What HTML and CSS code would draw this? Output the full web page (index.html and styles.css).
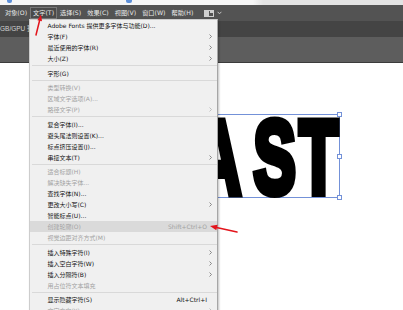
FILE: index.html
```html
<!DOCTYPE html>
<html lang="zh-CN">
<head>
<meta charset="utf-8">
<title>Illustrator 文字菜单</title>
<link rel="stylesheet" href="styles.css">
</head>
<body>
<div class="app">
  <div class="topstrip"><span class="blip b1"></span><span class="blip b2"></span></div>
  <div class="menubar">
    <span class="mb-item">对象(O)</span>
    <span class="mb-item active">文字(T)</span>
    <span class="mb-item">选择(S)</span>
    <span class="mb-item">效果(C)</span>
    <span class="mb-item">视图(V)</span>
    <span class="mb-item">窗口(W)</span>
    <span class="mb-item">帮助(H)</span>
    <span class="mb-tools">
      <svg class="ws-icon" width="10" height="7" viewBox="0 0 10 7"><rect x="0.5" y="0.5" width="9" height="6" fill="none" stroke="#cfcfcf"/><rect x="1" y="1" width="4" height="5" fill="#cfcfcf"/><rect x="6" y="1" width="3" height="2" fill="#cfcfcf"/></svg>
      <svg class="ws-chev" width="5" height="4" viewBox="0 0 5 4"><path d="M0.6 0.8 L2.5 2.8 L4.4 0.8" fill="none" stroke="#cfcfcf" stroke-width="0.9"/></svg>
    </span>
  </div>
  <div class="tabbar"><span class="doc-title">GB/GPU 预览)</span></div>
  <div class="panelbar"></div>
  <div class="canvas">
    <div class="selection">
      <div class="art-text"><span class="ch-a">A</span><span class="ch-s">S</span><span>T</span></div>
      <span class="handle h-top"></span>
      <span class="handle h-mid"></span>
      <span class="handle h-bot"></span>
    </div>
  </div>

  <div class="menu">
    <div class="mi"><span class="label">Adobe Fonts 提供更多字体与功能(D)...</span><span class="sub"></span></div>
    <div class="mi"><span class="label">字体(F)</span><span class="sub"><svg width="3" height="5" viewBox="0 0 3 5"><path d="M0.5 0.5 L2.5 2.5 L0.5 4.5"/></svg></span></div>
    <div class="mi"><span class="label">最近使用的字体(R)</span><span class="sub"><svg width="3" height="5" viewBox="0 0 3 5"><path d="M0.5 0.5 L2.5 2.5 L0.5 4.5"/></svg></span></div>
    <div class="mi"><span class="label">大小(Z)</span><span class="sub"><svg width="3" height="5" viewBox="0 0 3 5"><path d="M0.5 0.5 L2.5 2.5 L0.5 4.5"/></svg></span></div>
    <div class="sep"></div>
    <div class="mi"><span class="label">字形(G)</span><span class="sub"></span></div>
    <div class="sep"></div>
    <div class="mi dis"><span class="label">类型转换(V)</span><span class="sub"></span></div>
    <div class="mi dis"><span class="label">区域文字选项(A)...</span><span class="sub"></span></div>
    <div class="mi dis"><span class="label">路径文字(P)</span><span class="sub"><svg width="3" height="5" viewBox="0 0 3 5"><path d="M0.5 0.5 L2.5 2.5 L0.5 4.5"/></svg></span></div>
    <div class="sep"></div>
    <div class="mi"><span class="label">复合字体(I)...</span><span class="sub"></span></div>
    <div class="mi"><span class="label">避头尾法则设置(K)...</span><span class="sub"></span></div>
    <div class="mi"><span class="label">标点挤压设置(J)...</span><span class="sub"></span></div>
    <div class="mi"><span class="label">串接文本(T)</span><span class="sub"><svg width="3" height="5" viewBox="0 0 3 5"><path d="M0.5 0.5 L2.5 2.5 L0.5 4.5"/></svg></span></div>
    <div class="sep"></div>
    <div class="mi dis"><span class="label">适合标题(H)</span><span class="sub"></span></div>
    <div class="mi dis"><span class="label">解决缺失字体...</span><span class="sub"></span></div>
    <div class="mi"><span class="label">查找字体(N)...</span><span class="sub"></span></div>
    <div class="mi"><span class="label">更改大小写(C)</span><span class="sub"><svg width="3" height="5" viewBox="0 0 3 5"><path d="M0.5 0.5 L2.5 2.5 L0.5 4.5"/></svg></span></div>
    <div class="mi"><span class="label">智能标点(U)...</span><span class="sub"></span></div>
    <div class="mi dis hl"><span class="label">创建轮廓(O)</span><span class="key">Shift+Ctrl+O</span><span class="sub"></span></div>
    <div class="mi dis"><span class="label">视觉边距对齐方式(M)</span><span class="sub"></span></div>
    <div class="sep"></div>
    <div class="mi"><span class="label">插入特殊字符(I)</span><span class="sub"><svg width="3" height="5" viewBox="0 0 3 5"><path d="M0.5 0.5 L2.5 2.5 L0.5 4.5"/></svg></span></div>
    <div class="mi"><span class="label">插入空白字符(W)</span><span class="sub"><svg width="3" height="5" viewBox="0 0 3 5"><path d="M0.5 0.5 L2.5 2.5 L0.5 4.5"/></svg></span></div>
    <div class="mi"><span class="label">插入分隔符(B)</span><span class="sub"><svg width="3" height="5" viewBox="0 0 3 5"><path d="M0.5 0.5 L2.5 2.5 L0.5 4.5"/></svg></span></div>
    <div class="mi dis"><span class="label">用占位符文本填充</span><span class="sub"></span></div>
    <div class="sep"></div>
    <div class="mi"><span class="label">显示隐藏字符(S)</span><span class="key">Alt+Ctrl+I</span><span class="sub"></span></div>
    <div class="mi dis"><span class="label">文字方向(Y)</span><span class="sub"><svg width="3" height="5" viewBox="0 0 3 5"><path d="M0.5 0.5 L2.5 2.5 L0.5 4.5"/></svg></span></div>
  </div>

  <svg class="annot" width="403" height="310" viewBox="0 0 403 310">
    <line x1="36" y1="35" x2="39.6" y2="20.5" stroke="#e3141b" stroke-width="1.5" stroke-linecap="round"/>
    <polygon points="41,14.5 42,21.3 37.4,20.3" fill="#e3141b"/>
    <line x1="237" y1="232" x2="216.5" y2="227.4" stroke="#e3141b" stroke-width="1.5" stroke-linecap="round"/>
    <polygon points="210,226 217.6,224.8 216.3,230.2" fill="#e3141b"/>
  </svg>
</div>
</body>
</html>
```

FILE: styles.css
```css
html, body {
  margin: 0;
  padding: 0;
}

body {
  width: 403px;
  height: 310px;
  overflow: hidden;
  font-family: "DejaVu Sans", "Noto Sans CJK SC", sans-serif;
  background: #fff;
}

.app {
  position: relative;
  width: 403px;
  height: 310px;
  display: flex;
  flex-direction: column;
  overflow: hidden;
  background: #fff;
}

/* very top strip of the window behind */
.topstrip {
  flex: none;
  height: 5px;
  display: flex;
  background: linear-gradient(to right, #f6f6f6 0, #f6f6f6 253px, #e3e3e3 263px, #e3e3e3 100%);
}

.blip {
  height: 3px;
  background: #5d8fd8;
  border-radius: 0 0 2px 2px;
}

.b1 { width: 5px; margin-left: 7px; }
.b2 { width: 6px; margin-left: 114px; }

/* application menu bar */
.menubar {
  flex: none;
  height: 16px;
  display: flex;
  align-items: center;
  padding-left: 2px;
  background: #535353;
  color: #e8e8e8;
  font-family: "DejaVu Sans", "Noto Sans CJK SC", sans-serif;
  font-size: 6.2px;
  white-space: nowrap;
}

.mb-item {
  height: 10px;
  line-height: 10px;
  padding: 0 2px;
  border: 1px solid transparent;
}

.mb-item.active {
  border-color: #787878;
  background: #4a4a4a;
}

.mb-tools {
  display: flex;
  align-items: center;
  gap: 3px;
  margin-left: 8px;
}

/* document tab bar */
.tabbar {
  flex: none;
  height: 16px;
  line-height: 16px;
  background: #444;
  color: #d2d2d2;
  font-family: "Liberation Sans", "Noto Sans CJK SC", sans-serif;
  font-size: 6.5px;
  white-space: nowrap;
  overflow: hidden;
}

/* control panel */
.panelbar {
  flex: none;
  height: 25px;
  background: #5d5d5d;
  border-bottom: 1px solid #3b3b3b;
}

/* artboard */
.canvas {
  flex: 1;
  position: relative;
  background: #fff;
}

.selection {
  position: absolute;
  left: 150px;
  top: 51px;
  width: 190px;
  height: 84px;
  box-sizing: border-box;
  border: 1px solid #7391d8;
}

.art-text {
  position: absolute;
  right: 1px;
  top: -9.5px;
  font-family: "Liberation Sans", sans-serif;
  font-weight: bold;
  font-size: 103px;
  line-height: 1;
  color: #000;
  -webkit-text-stroke: 8px #000;
  white-space: nowrap;
  transform: scaleX(0.615);
  transform-origin: right top;
}

.ch-a { margin-right: 20px; }
.ch-s { margin-right: 6px; }

.handle {
  position: absolute;
  right: -3px;
  width: 3px;
  height: 3px;
  background: #fff;
  border: 1px solid #7391d8;
}

.h-top { top: -3px; }
.h-mid { top: 39px; }
.h-bot { bottom: -3px; }

/* dropdown menu */
.menu {
  position: absolute;
  left: 29px;
  top: 19px;
  width: 189px;
  box-sizing: border-box;
  background: #f0f0f0;
  border: 1px solid #cdcdcd;
  border-right-color: #a6a6a6;
  box-shadow: 1px 1px 2px rgba(0, 0, 0, 0.25);
  font-family: "DejaVu Sans", "Noto Sans CJK SC", sans-serif;
  font-size: 6px;
  color: #111;
}

.mi {
  display: flex;
  align-items: center;
  height: 11px;
  line-height: 11px;
  padding-left: 17.5px;
  white-space: nowrap;
}

.mi .label {
  flex: 1;
}

.mi .key {
  flex: none;
}

.mi .sub {
  flex: none;
  width: 10px;
  height: 11px;
  display: flex;
  align-items: center;
  padding-left: 2px;
  box-sizing: border-box;
}

.mi .sub path {
  fill: none;
  stroke: #6e6e6e;
  stroke-width: 0.8;
}

.mi.dis {
  color: #a2a2a2;
}

.mi.dis .sub path {
  stroke: #b3b3b3;
}

.mi.hl {
  background: #dadada;
}

.sep {
  height: 1px;
  margin: 1.25px 0 1.25px 2px;
  background: #d9d9d9;
}

/* red annotation arrows */
.annot {
  position: absolute;
  left: 0;
  top: 0;
  pointer-events: none;
}
```
